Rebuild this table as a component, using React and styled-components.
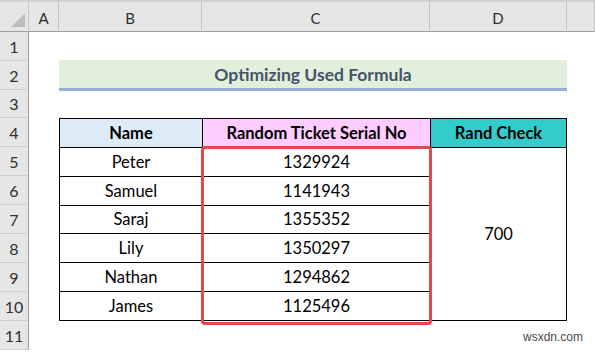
import React from 'react';
import styled, { createGlobalStyle } from 'styled-components';

const GlobalStyle = createGlobalStyle`
    html, body {
        margin: 0;
        padding: 0;
        background: #ffffff;
        overflow: hidden;
    }
    body {
        font-family: Lato, "Open Sans", sans-serif;
    }
`;

// sheet grid: row header col, A, B, C, D, E
const Sheet = styled.div`
    display: grid;
    grid-template-columns: 29px 30px 143px 228px 137px 1fr;
    grid-template-rows: 32px 29px 29px 28px repeat(8, 29px);
    width: 595px;
    height: 352px;
    background: #ffffff;
`;

const Corner = styled.div`
    grid-row: 1;
    grid-column: 1;
    background: #e6e6e6;
    border-top: 2px solid #d2d2d2;
    border-right: 1px solid #c8c8c8;
    border-bottom: 1px solid #9e9e9e;
    position: relative;

    &::after {
        content: '';
        position: absolute;
        right: 3px;
        bottom: 4px;
        width: 0;
        height: 0;
        border-left: 14px solid transparent;
        border-bottom: 14px solid #bdbdbd;
    }
`;

const ColHead = styled.div`
    grid-row: 1;
    grid-column: ${(props) => props.col};
    display: flex;
    align-items: center;
    justify-content: center;
    padding-top: 2px;
    background: #e6e6e6;
    border-top: 2px solid #d2d2d2;
    border-right: 1px solid #c4c4c4;
    border-bottom: 1px solid #9e9e9e;
    color: #2f2f2f;
    font-size: 15px;
`;

const RowHead = styled.div`
    grid-row: ${(props) => props.row};
    grid-column: 1;
    display: flex;
    align-items: center;
    justify-content: center;
    background: #e6e6e6;
    border-right: 1px solid #9e9e9e;
    border-bottom: 1px solid #d0d0d0;
    color: #303030;
    font-size: 16px;
`;

const Title = styled.div`
    grid-row: 3;
    grid-column: 3 / 6;
    display: flex;
    align-items: center;
    justify-content: center;
    margin-top: -1px;
    margin-bottom: -1px;
    background: #e2efda;
    border-bottom: 3px solid #9aadd6;
    color: #44546a;
    font-size: 17.5px;
    font-weight: 700;
`;

const Table = styled.div`
    grid-row: 5 / 12;
    grid-column: 3 / 6;
    display: grid;
    grid-template-columns: 142px 227px 1fr;
    grid-template-rows: repeat(7, 1fr);
    gap: 1px;
    background: #000000;
    border: 1px solid #000000;
`;

const HeadCell = styled.div`
    display: flex;
    align-items: center;
    justify-content: center;
    background: ${(props) => props.bg};
    color: #000000;
    font-size: 16.5px;
    font-weight: 700;
`;

const Cell = styled.div`
    grid-column: ${(props) => props.col};
    grid-row: ${(props) => props.row};
    display: flex;
    align-items: center;
    justify-content: center;
    background: #ffffff;
    color: #000000;
    font-size: 16.5px;
`;

const Highlight = styled.div`
    grid-column: 2;
    grid-row: 2 / 8;
    z-index: 1;
    margin: -2px -2px -5px -2px;
    border: 3px solid #e04a4c;
    border-radius: 4px;
    pointer-events: none;
`;

const Watermark = styled.div`
    grid-row: 12;
    grid-column: 5 / 7;
    justify-self: end;
    align-self: center;
    margin-right: 12px;
    margin-top: 2px;
    font-family: "Liberation Sans", Arial, sans-serif;
    font-size: 12px;
    color: #4a4a4a;
    z-index: 2;
`;

const columns = ['A', 'B', 'C', 'D', ''];

const rows = [
    { name: 'Peter', serial: 1329924 },
    { name: 'Samuel', serial: 1141943 },
    { name: 'Saraj', serial: 1355352 },
    { name: 'Lily', serial: 1350297 },
    { name: 'Nathan', serial: 1294862 },
    { name: 'James', serial: 1125496 },
];

export default function App() {
    return (
        <>
            <GlobalStyle />
            <Sheet>
                <Corner />
                {columns.map((c, i) => (
                    <ColHead key={i} col={i + 2}>{c}</ColHead>
                ))}
                {Array.from({ length: 11 }, (_, i) => (
                    <RowHead key={i} row={i + 2}>{i + 1}</RowHead>
                ))}

                <Title>Optimizing Used Formula</Title>

                <Table>
                    <HeadCell bg="#ddebf7">Name</HeadCell>
                    <HeadCell bg="#ffccff">Random Ticket Serial No</HeadCell>
                    <HeadCell bg="#33cccc">Rand Check</HeadCell>
                    {rows.map((r, i) => (
                        <React.Fragment key={r.name}>
                            <Cell col={1} row={i + 2}>{r.name}</Cell>
                            <Cell col={2} row={i + 2}>{r.serial}</Cell>
                        </React.Fragment>
                    ))}
                    <Cell col={3} row="2 / 8">700</Cell>
                    <Highlight />
                </Table>

                <Watermark>wsxdn.com</Watermark>
            </Sheet>
        </>
    );
}
